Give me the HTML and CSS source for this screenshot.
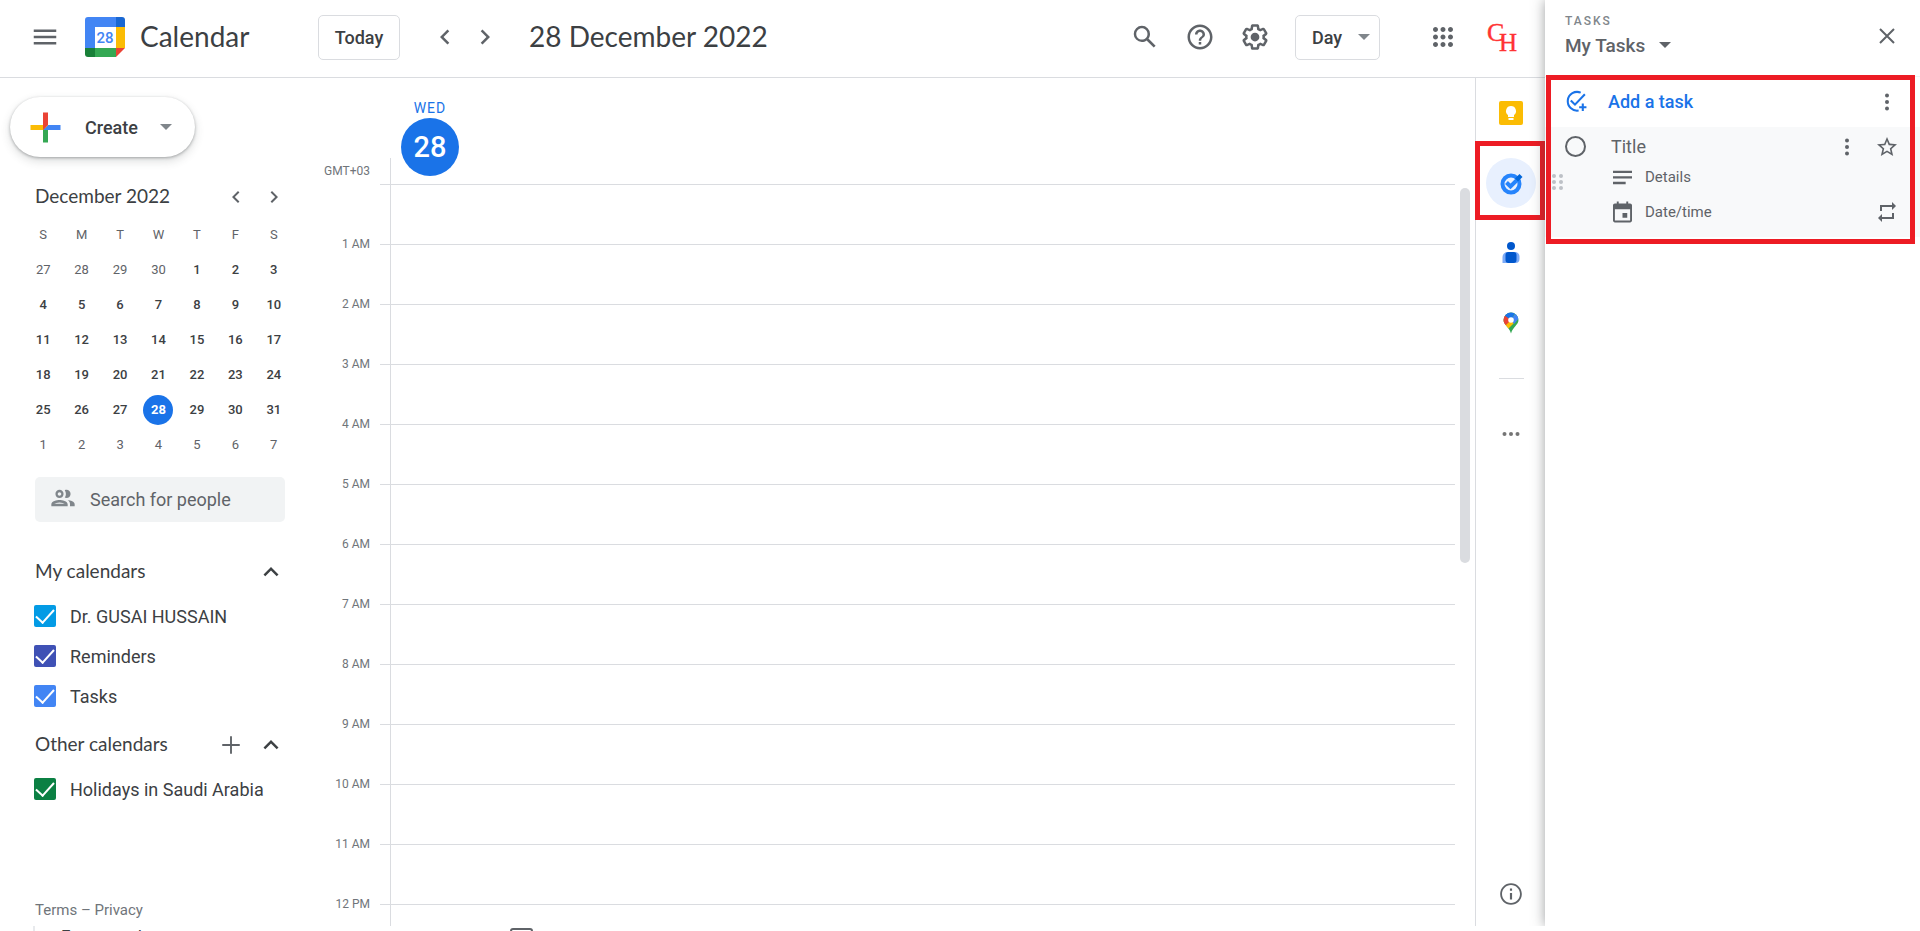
FILE: index.html
```html
<!DOCTYPE html>
<html lang="en">

<head>
    <meta charset="UTF-8">
    <meta name="viewport" content="width=device-width, initial-scale=1.0">
    <title>Calendar - 28 December 2022</title>
    <link rel="stylesheet" href="styles.css">
</head>

<body>
    <div class="app">
        <div class="calendar">
            <!-- Header -->
            <header class="navbar">
                <button class="icon-btn" aria-label="Main menu">
                    <svg class="icon" viewBox="0 0 24 24"><path d="M3 18h18v-2H3v2zm0-5h18v-2H3v2zm0-7v2h18V6H3z"/></svg>
                </button>
                <svg class="logo" viewBox="0 0 40 40">
                    <path fill="#4285f4" d="M3 0h28v10H10v21H0V3a3 3 0 0 1 3-3z"/>
                    <path fill="#1967d2" d="M31 0h6a3 3 0 0 1 3 3v7h-9z"/>
                    <path fill="#fbbc04" d="M31 10h9v21h-9z"/>
                    <path fill="#34a853" d="M10 31h21v9H10z"/>
                    <path fill="#188038" d="M0 31h10v9H3a3 3 0 0 1-3-3z"/>
                    <path fill="#ea4335" d="M31 31h9l-9 9z"/>
                    <path fill="#fff" d="M10 10h21v21H10z"/>
                    <text x="20" y="26" text-anchor="middle" class="logo-day">28</text>
                </svg>
                <span class="brand">Calendar</span>
                <button class="outline-btn today-btn">Today</button>
                <button class="icon-btn" aria-label="Previous day">
                    <svg class="icon" viewBox="0 0 24 24"><path d="M15.41 7.41 14 6l-6 6 6 6 1.41-1.41L10.83 12z"/></svg>
                </button>
                <button class="icon-btn" aria-label="Next day">
                    <svg class="icon" viewBox="0 0 24 24"><path d="M10 6 8.59 7.41 13.17 12l-4.58 4.59L10 18l6-6z"/></svg>
                </button>
                <h1 class="date-title">28 December 2022</h1>

                <div class="tools">
                    <button class="icon-btn" aria-label="Search">
                        <svg class="icon" viewBox="0 0 24 24"><path d="M20.49 19l-5.73-5.73C15.53 12.2 16 10.91 16 9.5A6.5 6.5 0 1 0 9.5 16c1.41 0 2.7-.47 3.77-1.24L19 20.49 20.49 19zM5 9.5C5 7.01 7.01 5 9.5 5S14 7.01 14 9.5 11.99 14 9.5 14 5 11.99 5 9.5z"/></svg>
                    </button>
                    <button class="icon-btn" aria-label="Help">
                        <svg class="icon" viewBox="0 0 24 24"><path d="M11 18h2v-2h-2v2zm1-16C6.48 2 2 6.48 2 12s4.48 10 10 10 10-4.48 10-10S17.52 2 12 2zm0 18c-4.41 0-8-3.59-8-8s3.59-8 8-8 8 3.59 8 8-3.59 8-8 8zm0-14c-2.21 0-4 1.79-4 4h2c0-1.1.9-2 2-2s2 .9 2 2c0 2-3 1.75-3 5h2c0-2.25 3-2.5 3-5 0-2.21-1.79-4-4-4z"/></svg>
                    </button>
                    <button class="icon-btn" aria-label="Settings">
                        <svg class="icon" viewBox="0 0 24 24"><path d="M13.85 22.25h-3.7c-.74 0-1.36-.54-1.45-1.27l-.27-1.89c-.27-.14-.53-.29-.79-.46l-1.8.72c-.7.26-1.47-.03-1.81-.65L2.2 15.53c-.35-.66-.2-1.44.36-1.88l1.53-1.19c-.01-.15-.02-.3-.02-.46 0-.15.01-.31.02-.46l-1.52-1.19c-.59-.45-.74-1.26-.37-1.88l1.85-3.19c.34-.62 1.11-.9 1.79-.63l1.81.73c.26-.17.52-.32.78-.46l.27-1.91c.09-.7.71-1.25 1.44-1.25h3.7c.74 0 1.36.54 1.45 1.27l.27 1.89c.27.14.53.29.79.46l1.8-.72c.71-.26 1.48.03 1.82.65l1.84 3.18c.36.66.2 1.44-.36 1.88l-1.52 1.19c.01.15.02.3.02.46s-.01.31-.02.46l1.52 1.19c.56.45.72 1.23.37 1.86l-1.86 3.22c-.34.62-1.11.9-1.8.63l-1.8-.72c-.26.17-.52.32-.78.46l-.27 1.91c-.1.68-.72 1.22-1.46 1.22zm-3.23-2h2.76l.37-2.55.53-.22c.44-.18.88-.44 1.34-.78l.45-.34 2.38.96 1.38-2.4-2.03-1.58.07-.56c.03-.26.06-.51.06-.78s-.03-.53-.06-.78l-.07-.56 2.03-1.58-1.39-2.4-2.39.96-.45-.35c-.42-.32-.87-.58-1.33-.77l-.52-.22-.37-2.55h-2.76l-.37 2.55-.53.21c-.44.19-.88.44-1.34.79l-.45.33-2.38-.95-1.39 2.39 2.03 1.58-.07.56a7 7 0 0 0-.06.79c0 .26.02.53.06.78l.07.56-2.03 1.58 1.38 2.4 2.39-.96.45.35c.43.33.86.58 1.33.77l.53.22.38 2.55z"/><circle cx="12" cy="12" r="3.5"/></svg>
                    </button>
                    <div class="select-box view-box">
                        <select aria-label="View"><option>Day</option><option>Week</option><option>Month</option></select>
                        <span class="caret"></span>
                    </div>
                    <button class="icon-btn" aria-label="Google apps">
                        <svg class="icon" viewBox="0 0 24 24"><path d="M6 8c1.1 0 2-.9 2-2s-.9-2-2-2-2 .9-2 2 .9 2 2 2zm6 12c1.1 0 2-.9 2-2s-.9-2-2-2-2 .9-2 2 .9 2 2 2zm-6 0c1.1 0 2-.9 2-2s-.9-2-2-2-2 .9-2 2 .9 2 2 2zm0-6c1.1 0 2-.9 2-2s-.9-2-2-2-2 .9-2 2 .9 2 2 2zm6 0c1.1 0 2-.9 2-2s-.9-2-2-2-2 .9-2 2 .9 2 2 2zm4-8c0 1.1.9 2 2 2s2-.9 2-2-.9-2-2-2-2 .9-2 2zm-4 2c1.1 0 2-.9 2-2s-.9-2-2-2-2 .9-2 2 .9 2 2 2zm6 6c1.1 0 2-.9 2-2s-.9-2-2-2-2 .9-2 2 .9 2 2 2zm0 6c1.1 0 2-.9 2-2s-.9-2-2-2-2 .9-2 2 .9 2 2 2z"/></svg>
                    </button>
                    <button class="icon-btn account-btn" aria-label="Account">
                        <svg class="account" viewBox="0 0 40 40"><text x="4" y="24">C</text><text x="16" y="34" class="second">H</text></svg>
                    </button>
                </div>
            </header>

            <div class="content">
                <!-- Sidebar -->
                <aside class="sidebar">
                    <button class="create-btn">
                        <svg viewBox="0 0 36 36"><path fill="#34a853" d="M16 16v14h4V20z"/><path fill="#4285f4" d="M30 16H20l-4 4h14z"/><path fill="#fbbc05" d="M6 16v4h10l4-4z"/><path fill="#ea4335" d="M20 16V6h-4v14z"/></svg>
                        <span>Create</span>
                        <span class="caret"></span>
                    </button>

                    <div class="mini-head">
                        <h2>December 2022</h2>
                        <button class="icon-btn" aria-label="Previous month">
                            <svg class="icon" viewBox="0 0 24 24"><path d="M15.41 7.41 14 6l-6 6 6 6 1.41-1.41L10.83 12z"/></svg>
                        </button>
                        <button class="icon-btn" aria-label="Next month">
                            <svg class="icon" viewBox="0 0 24 24"><path d="M10 6 8.59 7.41 13.17 12l-4.58 4.59L10 18l6-6z"/></svg>
                        </button>
                    </div>
                    <table class="mini-cal">
                        <thead>
                            <tr><th>S</th><th>M</th><th>T</th><th>W</th><th>T</th><th>F</th><th>S</th></tr>
                        </thead>
                        <tbody>
                            <tr><td class="other">27</td><td class="other">28</td><td class="other">29</td><td class="other">30</td><td>1</td><td>2</td><td>3</td></tr>
                            <tr><td>4</td><td>5</td><td>6</td><td>7</td><td>8</td><td>9</td><td>10</td></tr>
                            <tr><td>11</td><td>12</td><td>13</td><td>14</td><td>15</td><td>16</td><td>17</td></tr>
                            <tr><td>18</td><td>19</td><td>20</td><td>21</td><td>22</td><td>23</td><td>24</td></tr>
                            <tr><td>25</td><td>26</td><td>27</td><td><span class="current">28</span></td><td>29</td><td>30</td><td>31</td></tr>
                            <tr><td class="other">1</td><td class="other">2</td><td class="other">3</td><td class="other">4</td><td class="other">5</td><td class="other">6</td><td class="other">7</td></tr>
                        </tbody>
                    </table>

                    <label class="people-search">
                        <svg viewBox="0 0 24 24"><path d="M9 12c1.93 0 3.5-1.57 3.5-3.5S10.93 5 9 5 5.5 6.57 5.5 8.5 7.07 12 9 12zm0-5c.83 0 1.5.67 1.5 1.5S9.83 10 9 10s-1.5-.67-1.5-1.5S8.17 7 9 7zm0 6.75c-2.34 0-7 1.17-7 3.5V19h14v-1.750c0-2.330-4.660-3.500-7-3.500zM4.340 17c.84-.58 2.870-1.250 4.660-1.250s3.820.67 4.660 1.250H4.340zm11.700-3.190c1.160.84 1.960 1.960 1.960 3.440V19h4v-1.750c0-2.020-3.500-3.170-5.960-3.440zM15 12c1.930 0 3.500-1.570 3.500-3.500S16.930 5 15 5c-.54 0-1.040.13-1.500.35.63.89 1 1.980 1 3.150s-.37 2.260-1 3.150c.46.22.96.35 1.500.35z"/></svg>
                        <input type="text" placeholder="Search for people" aria-label="Search for people">
                    </label>

                    <div class="list-head">
                        <h2>My calendars</h2>
                        <button class="icon-btn dark" aria-label="Collapse my calendars">
                            <svg class="icon" viewBox="0 0 24 24"><path d="M12 8l-6 6 1.41 1.41L12 10.83l4.59 4.58L18 14z"/></svg>
                        </button>
                    </div>
                    <ul class="cal-list">
                        <li><label><input type="checkbox" class="sky" checked>Dr. GUSAI HUSSAIN</label></li>
                        <li><label><input type="checkbox" class="indigo" checked>Reminders</label></li>
                        <li><label><input type="checkbox" class="blue" checked>Tasks</label></li>
                    </ul>
                    <div class="list-head">
                        <h2>Other calendars</h2>
                        <button class="icon-btn" aria-label="Add other calendars">
                            <svg class="icon" viewBox="0 0 24 24"><path d="M19 12.750h-6.250V19h-1.500v-6.250H5v-1.500h6.250V5h1.500v6.250H19z"/></svg>
                        </button>
                        <button class="icon-btn dark" aria-label="Collapse other calendars">
                            <svg class="icon" viewBox="0 0 24 24"><path d="M12 8l-6 6 1.41 1.41L12 10.83l4.59 4.58L18 14z"/></svg>
                        </button>
                    </div>
                    <ul class="cal-list">
                        <li><label><input type="checkbox" class="green" checked>Holidays in Saudi Arabia</label></li>
                    </ul>
                    <div class="legal"><a href="#">Terms</a> – <a href="#">Privacy</a></div>
                </aside>

                <!-- Day view -->
                <main class="day-view">
                    <div class="day-head">
                        <span class="zone">GMT+03</span>
                        <span class="tick"></span>
                        <span class="stub"></span>
                        <div class="day-label">
                            <span class="weekday">WED</span>
                            <span class="day-number">28</span>
                        </div>
                    </div>
                    <div class="scroller">
                        <div class="hours">
                            <div class="hour"><span>1 AM</span></div>
                            <div class="hour"><span>2 AM</span></div>
                            <div class="hour"><span>3 AM</span></div>
                            <div class="hour"><span>4 AM</span></div>
                            <div class="hour"><span>5 AM</span></div>
                            <div class="hour"><span>6 AM</span></div>
                            <div class="hour"><span>7 AM</span></div>
                            <div class="hour"><span>8 AM</span></div>
                            <div class="hour"><span>9 AM</span></div>
                            <div class="hour"><span>10 AM</span></div>
                            <div class="hour"><span>11 AM</span></div>
                            <div class="hour"><span>12 PM</span></div>
                            <div class="hour"><span></span></div>
                        </div>
                        <div class="scrollbar"><div class="thumb"></div></div>
                    </div>
                </main>

                <!-- App rail -->
                <nav class="rail">
                    <button class="rail-btn" aria-label="Keep">
                        <svg viewBox="0 0 24 24"><rect width="24" height="24" rx="2" fill="#fbbc04"/><path fill="#fff" d="M12 5a5 5 0 0 0-3 9v2h6v-2a5 5 0 0 0-3-9zM9.500 17h5v2h-5z"/></svg>
                    </button>
                    <button class="rail-btn selected" aria-label="Tasks">
                        <svg viewBox="0 0 24 24"><circle cx="12" cy="13" r="8.500" fill="none" stroke="#2684fc" stroke-width="4"/><path fill="none" stroke="#2684fc" stroke-width="4" d="M7.500 11.500l4 4 7.500-7.500"/><path fill="#0066da" d="M16 7.500l4.500-4.500 3 3-4.500 4.500z"/></svg>
                    </button>
                    <button class="rail-btn" aria-label="Contacts">
                        <svg viewBox="0 0 24 24"><circle cx="12" cy="5" r="4" fill="#0057cc"/><path fill="#7baaf7" d="M3.500 16a5 5 0 0 1 5-5h7.500a4.500 4.500 0 0 1 4.500 4.500V18a4 4 0 0 1-4 4h-13z"/><rect x="6.500" y="11" width="11" height="11" rx="3" fill="#0057cc"/></svg>
                    </button>
                    <button class="rail-btn" aria-label="Maps">
                        <svg viewBox="0 0 24 24">
                            <clipPath id="pin"><path d="M12 1.500a7.500 7.500 0 0 0-7.500 7.500c0 5 5.500 6.500 7.500 13.500 2-7 7.500-8.500 7.500-13.500A7.500 7.500 0 0 0 12 1.500z"/></clipPath>
                            <g clip-path="url(#pin)">
                                <path fill="#34a853" d="M0 0h24v24H0z"/>
                                <path fill="#fbbc04" d="M0 20L12 7l3 5-9 9z"/>
                                <path fill="#ea4335" d="M0 4h6l6 5-7 7-5 0z"/>
                                <path fill="#1a73e8" d="M5 4l3-4h9l-5 9z"/>
                                <path fill="#4285f4" d="M12 9l5-8 4 5-6 7z"/>
                            </g>
                            <circle cx="12" cy="9" r="2.800" fill="#fff"/>
                        </svg>
                    </button>
                    <hr>
                    <button class="rail-btn" aria-label="Get add-ons">
                        <svg viewBox="0 0 24 24" fill="#757575"><circle cx="5.500" cy="12" r="2"/><circle cx="12" cy="12" r="2"/><circle cx="18.500" cy="12" r="2"/></svg>
                    </button>
                    <button class="rail-btn info-btn" aria-label="Information">
                        <svg viewBox="0 0 24 24" fill="#5f6368"><path d="M11 17h2v-6h-2v6zm1-15C6.480 2 2 6.480 2 12s4.480 10 10 10 10-4.480 10-10S17.520 2 12 2zm0 18.300c-4.600 0-8.300-3.700-8.300-8.300S7.400 3.700 12 3.700s8.300 3.700 8.300 8.300-3.700 8.300-8.300 8.300zM11 9h2V7h-2v2z"/></svg>
                    </button>
                </nav>
            </div>
        </div>

        <!-- Tasks panel -->
        <section class="tasks">
            <div class="tasks-head">
                <div>
                    <div class="eyebrow">TASKS</div>
                    <div class="select-box list-box">
                        <select aria-label="Task list"><option>My Tasks</option></select>
                        <span class="caret"></span>
                    </div>
                </div>
                <button class="icon-btn" aria-label="Close">
                    <svg class="icon close" viewBox="0 0 24 24"><path d="M5 5l14 14M19 5L5 19"/></svg>
                </button>
            </div>
            <div class="add-row">
                <button class="add-btn">
                    <svg viewBox="0 0 24 24"><path d="M17 3.500A9 9 0 1 0 15 20.700M7.500 11l4 4L21 5M19 14v7M15.500 17.500h7"/></svg>
                    Add a task
                </button>
                <button class="icon-btn" aria-label="List options">
                    <svg class="icon small" viewBox="0 0 24 24"><circle cx="12" cy="5.500" r="2"/><circle cx="12" cy="12" r="2"/><circle cx="12" cy="18.500" r="2"/></svg>
                </button>
            </div>
            <div class="task">
                <svg class="drag" viewBox="0 0 12 18"><circle cx="2" cy="3" r="2"/><circle cx="9" cy="3" r="2"/><circle cx="2" cy="9" r="2"/><circle cx="9" cy="9" r="2"/><circle cx="2" cy="15" r="2"/><circle cx="9" cy="15" r="2"/></svg>
                <div class="task-row title-row">
                    <button class="done-btn" aria-label="Mark complete"></button>
                    <input type="text" placeholder="Title" aria-label="Title">
                    <button class="icon-btn" aria-label="Task options">
                        <svg class="icon small" viewBox="0 0 24 24"><circle cx="12" cy="5.500" r="2"/><circle cx="12" cy="12" r="2"/><circle cx="12" cy="18.500" r="2"/></svg>
                    </button>
                    <button class="icon-btn" aria-label="Star">
                        <svg class="icon small" viewBox="0 0 24 24"><path d="M22 9.240l-7.190-.62L12 2 9.190 8.630 2 9.240l5.460 4.730L5.820 21 12 17.270 18.180 21l-1.630-7.030L22 9.240zM12 15.400l-3.760 2.270 1-4.280-3.320-2.880 4.380-.38L12 6.100l1.710 4.040 4.380.38-3.320 2.880 1 4.280L12 15.400z"/></svg>
                    </button>
                </div>
                <div class="task-row detail-row">
                    <svg class="icon" viewBox="0 0 24 24"><path d="M0 4h24v3H0zM0 11h24v3H0zM0 18h16v3H0z"/></svg>
                    <input type="text" placeholder="Details" aria-label="Details">
                </div>
                <div class="task-row date-row">
                    <svg class="icon" viewBox="0 0 20 22"><path d="M15 12h-5v5h5v-5zM14 0v2H6V0H4v2H2C.9 2 0 2.900 0 4v16c0 1.100.9 2 2 2h16c1.100 0 2-.9 2-2V4c0-1.100-.9-2-2-2h-2V0h-2zm4 20H2V8h16v12z"/></svg>
                    <button class="date-btn">Date/time</button>
                    <button class="icon-btn" aria-label="Repeat">
                        <svg class="icon small" viewBox="0 0 24 24"><path d="M5 5h12V2l4 4-4 4V7H7v4H5zM19 19H7v3l-4-4 4-4v3h10v-4h2z"/></svg>
                    </button>
                </div>
            </div>
            <div class="marker"></div>
        </section>
    </div>

    <!-- Next section, cut off by the window -->
    <div class="strip">
        <span class="strip-text">Forms and</span>
        <span class="strip-box"></span>
    </div>
</body>

</html>
```
FILE: styles.css
```css
* {
    box-sizing: border-box;
}

body {
    font-family: Roboto, Arial, sans-serif;
    margin: 0;
    height: 100vh;
    display: flex;
    flex-direction: column;
    overflow: hidden;
    background-color: #fff;
    color: #3c4043;
}

h1, h2, ul {
    margin: 0;
    padding: 0;
    font-weight: 400;
}

button, input, select {
    font-family: inherit;
    color: inherit;
    border: none;
    background: transparent;
    padding: 0;
    margin: 0;
}

button {
    cursor: pointer;
}

a {
    color: inherit;
    text-decoration: none;
}

.app {
    flex: 1;
    min-height: 0;
    display: flex;
}

.calendar {
    flex: 1;
    min-width: 0;
    display: flex;
    flex-direction: column;
}

/* Icons */
.icon-btn {
    width: 40px;
    height: 40px;
    flex: none;
    display: flex;
    align-items: center;
    justify-content: center;
    color: #5f6368;
}

.icon-btn.dark {
    color: #3c4043;
}

.icon {
    width: 30px;
    height: 30px;
    fill: currentColor;
}

.icon.small {
    width: 24px;
    height: 24px;
}

.icon.close {
    width: 24px;
    height: 24px;
    stroke: currentColor;
    stroke-width: 2;
}

.caret {
    border: 6px solid transparent;
    border-top-color: #80868b;
    border-bottom: none;
}

/* Header */
.navbar {
    height: 78px;
    flex: none;
    display: flex;
    align-items: center;
    padding: 0 22px 3px 25px;
    border-bottom: 1px solid #dadce0;
}

.logo {
    width: 40px;
    height: 40px;
    margin: 0 15px 0 20px;
}

.logo-day {
    font-size: 15px;
    font-weight: 500;
    fill: #4285f4;
}

.brand,
.date-title {
    font-family: Lato, sans-serif;
    font-size: 28px;
    line-height: 34px;
    padding-bottom: 2px;
    white-space: nowrap;
}

.brand {
    width: 178px;
}

.date-title {
    margin-left: 24px;
}

.outline-btn,
.view-box {
    height: 45px;
    border: 1px solid #dadce0;
    border-radius: 5px;
    font-size: 18px;
    font-weight: 500;
}

.today-btn {
    width: 82px;
    margin-right: 25px;
}

.tools {
    margin-left: auto;
    display: flex;
    align-items: center;
}

.tools .icon-btn {
    margin-right: 15px;
}

.tools .account-btn {
    margin: 0 0 0 5px;
}

.select-box {
    position: relative;
    display: flex;
    align-items: center;
}

.select-box select {
    appearance: none;
    width: 100%;
    font-size: 18px;
    font-weight: 500;
}

.select-box .caret {
    position: absolute;
    right: 9px;
    pointer-events: none;
}

.view-box {
    width: 85px;
    margin: 0 43px 0 5px;
    padding-left: 16px;
}

.account {
    width: 40px;
    height: 40px;
    fill: #f33;
    stroke: #f33;
    stroke-width: 0.4;
    font: 26px "Liberation Serif", serif;
}

.account .second {
    font-size: 25px;
}

/* Body */
.content {
    flex: 1;
    min-height: 0;
    display: flex;
}

.sidebar {
    width: 316px;
    flex: none;
    display: flex;
    flex-direction: column;
    padding-left: 35px;
}

.create-btn {
    flex: none;
    width: 185px;
    height: 60px;
    margin: 19px 0 20px -25px;
    padding-left: 13px;
    border-radius: 30px;
    box-shadow: 0 1px 3px rgba(60, 64, 67, 0.4), 0 4px 8px 1px rgba(60, 64, 67, 0.15);
    display: flex;
    align-items: center;
    font-size: 18px;
    font-weight: 500;
}

.create-btn svg {
    width: 45px;
    height: 45px;
    margin-right: 17px;
}

.create-btn .caret {
    margin-left: 22px;
}

.mini-head {
    height: 40px;
    flex: none;
    display: flex;
    align-items: center;
    padding-right: 23px;
}

.mini-head h2,
.list-head h2 {
    flex: 1;
    font-family: Lato, sans-serif;
    font-size: 19px;
    line-height: 22px;
    padding-bottom: 2px;
}

.mini-head .icon-btn {
    width: 38px;
}

.mini-head .icon {
    width: 24px;
    height: 24px;
}

.mini-cal {
    width: 269px;
    margin-left: -11px;
    table-layout: fixed;
    border-collapse: collapse;
    font-size: 13px;
    font-weight: 500;
    text-align: center;
}

.mini-cal th,
.mini-cal td {
    height: 35px;
    padding: 0;
}

.mini-cal th,
.mini-cal .other {
    font-weight: 400;
    color: #5f6368;
}

.current {
    display: block;
    width: 30px;
    margin: 0 auto;
    line-height: 30px;
    border-radius: 50%;
    background-color: #1a73e8;
    color: #fff;
    font-weight: 700;
}

.people-search {
    width: 250px;
    height: 45px;
    flex: none;
    margin: 15px 0 26px;
    padding-left: 14px;
    border-radius: 5px;
    background-color: #f1f3f4;
    display: flex;
    align-items: center;
}

.people-search svg {
    width: 28px;
    height: 28px;
    margin: 0 13px 4px 0;
    fill: #80868b;
}

.people-search input {
    width: 180px;
    font-size: 18px;
}

input::placeholder {
    color: #5f6368;
    opacity: 1;
}

.list-head {
    height: 48px;
    flex: none;
    display: flex;
    align-items: center;
    padding-right: 25px;
}

.cal-list {
    list-style: none;
    margin-bottom: 5px;
}

.cal-list label {
    height: 40px;
    display: flex;
    align-items: center;
    font-size: 18px;
}

.cal-list input {
    appearance: none;
    width: 22px;
    height: 22px;
    margin: 0 14px 0 -1px;
    border-radius: 2px;
    display: flex;
    align-items: center;
    justify-content: center;
}

.cal-list input::after {
    content: "";
    width: 8px;
    height: 16px;
    flex: none;
    margin-bottom: 4px;
    border: solid #fff;
    border-width: 0 2px 2px 0;
    transform: rotate(42deg);
}

.sky {
    background-color: #039be5;
}

.indigo {
    background-color: #3f51b5;
}

.blue {
    background-color: #4285f4;
}

.green {
    background-color: #0b8043;
}

.legal {
    margin-top: auto;
    padding-bottom: 7px;
    font-size: 15px;
    line-height: 18px;
    color: #70757a;
}

/* Day view */
.day-view {
    flex: 1;
    min-width: 0;
    display: flex;
    flex-direction: column;
}

.day-head {
    height: 107px;
    flex: none;
    display: flex;
    align-items: flex-end;
    margin-right: 20px;
}

.zone {
    width: 54px;
    height: 21px;
    font-size: 12px;
    line-height: 14px;
    text-align: right;
    color: #70757a;
    white-space: nowrap;
}

.tick {
    width: 10px;
    margin-left: 10px;
    border-bottom: 1px solid #dadce0;
}

.stub {
    width: 11px;
    height: 27px;
    border-left: 1px solid #dadce0;
    border-bottom: 1px solid #dadce0;
}

.day-label {
    flex: 1;
    height: 87px;
    border-bottom: 1px solid #dadce0;
    color: #1a73e8;
}

.weekday,
.day-number {
    display: block;
    width: 58px;
    text-align: center;
}

.weekday {
    font-size: 14px;
    line-height: 20px;
    letter-spacing: 1px;
}

.day-number {
    line-height: 58px;
    border-radius: 50%;
    background-color: #1a73e8;
    color: #fff;
    font-size: 29px;
    font-weight: 500;
}

.scroller {
    flex: 1;
    min-height: 0;
    display: flex;
    overflow: hidden;
}

.hours {
    flex: 1;
}

.hour {
    height: 60px;
    display: flex;
    align-items: flex-end;
}

.hour span {
    width: 54px;
    margin: 0 10px -6px 0;
    font-size: 12px;
    line-height: 14px;
    text-align: right;
    color: #70757a;
}

.hour::before,
.hour::after {
    content: "";
    order: 1;
    width: 10px;
    border-bottom: 1px solid #dadce0;
}

.hour::after {
    flex: 1;
    height: 60px;
    border-left: 1px solid #dadce0;
}

.scrollbar {
    width: 20px;
    padding: 3px 5px;
}

.thumb {
    height: 51%;
    border-radius: 5px;
    background-color: #dadce0;
}

/* App rail */
.rail {
    width: 70px;
    flex: none;
    display: flex;
    flex-direction: column;
    align-items: center;
    gap: 20px;
    padding: 10px 0 7px 1px;
    border-left: 1px solid #dadce0;
}

.rail-btn {
    position: relative;
    width: 50px;
    height: 50px;
    flex: none;
    display: flex;
    align-items: center;
    justify-content: center;
    border-radius: 50%;
}

.rail-btn svg {
    width: 24px;
    height: 24px;
}

.rail-btn.selected {
    background-color: #e8f0fe;
}

/* Red highlight frames */
.rail-btn.selected::after,
.marker {
    content: "";
    position: absolute;
    border: 5px solid #ed1c24;
    pointer-events: none;
}

.rail-btn.selected::after {
    inset: -17px -9px -12px -11px;
}

.marker {
    inset: 75px 5px auto 1px;
    height: 169px;
}

.rail hr {
    width: 25px;
    margin: 10px 0;
    border: none;
    border-top: 1px solid #dadce0;
}

.info-btn {
    margin-top: auto;
}

.info-btn svg {
    width: 26px;
    height: 26px;
}

/* Tasks panel */
.tasks {
    position: relative;
    width: 375px;
    flex: none;
    background-color: #fff;
    box-shadow: 0 0 12px rgba(60, 64, 67, 0.5);
    clip-path: inset(0 0 0 -16px);
    color: #5f6368;
}

.tasks-head {
    height: 77px;
    display: flex;
    justify-content: space-between;
    padding: 14px 13px 0 20px;
    border-bottom: 1px solid #f1f3f4;
}

.tasks-head .icon-btn {
    margin-top: 2px;
}

.eyebrow {
    font-size: 12px;
    font-weight: 500;
    line-height: 15px;
    letter-spacing: 2px;
    color: #80868b;
}

.list-box {
    width: 106px;
    height: 32px;
}

.list-box select {
    font-size: 19px;
}

.list-box .caret {
    right: 0;
    border-top-color: #5f6368;
}

.add-row {
    height: 50px;
    display: flex;
    align-items: center;
    justify-content: space-between;
    padding: 0 13px 1px 18px;
}

.add-btn {
    display: flex;
    align-items: center;
    gap: 20px;
    font-size: 18px;
    font-weight: 500;
    color: #1a73e8;
}

.add-btn svg {
    width: 25px;
    height: 25px;
    fill: none;
    stroke: currentColor;
    stroke-width: 2;
}

.task {
    position: relative;
    height: 110px;
    padding: 0 13px 0 20px;
    background-color: #f8f9fa;
}

.drag {
    position: absolute;
    left: 7px;
    top: 46px;
    width: 12px;
    height: 18px;
    fill: #bdc1c6;
}

.task-row {
    display: flex;
    align-items: center;
}

.task-row input {
    flex: 1;
    min-width: 0;
    font-size: 15px;
}

.title-row {
    height: 39px;
}

.task-row.title-row input {
    font-size: 18px;
}

.done-btn {
    width: 21px;
    height: 21px;
    margin-right: 25px;
    border: 2px solid #5f6368;
    border-radius: 50%;
}

.detail-row,
.date-row {
    padding-left: 48px;
    gap: 13px;
}

.detail-row {
    height: 22px;
}

.detail-row > .icon,
.date-row > .icon {
    width: 19px;
    height: 22px;
}

.date-row {
    height: 48px;
}

.date-btn {
    flex: 1;
    font-size: 15px;
    text-align: left;
}

/* Cut off section */
.strip {
    height: 5px;
    flex: none;
    display: flex;
    overflow: hidden;
    margin-left: 33px;
    padding-left: 26px;
    border-left: 2px solid #e8eaed;
}

.strip-text {
    width: 449px;
    font-size: 17px;
    line-height: 20px;
}

.strip-box {
    width: 23px;
    height: 20px;
    margin-top: 2px;
    border: 2px solid #5f6368;
    border-radius: 3px;
}
```
